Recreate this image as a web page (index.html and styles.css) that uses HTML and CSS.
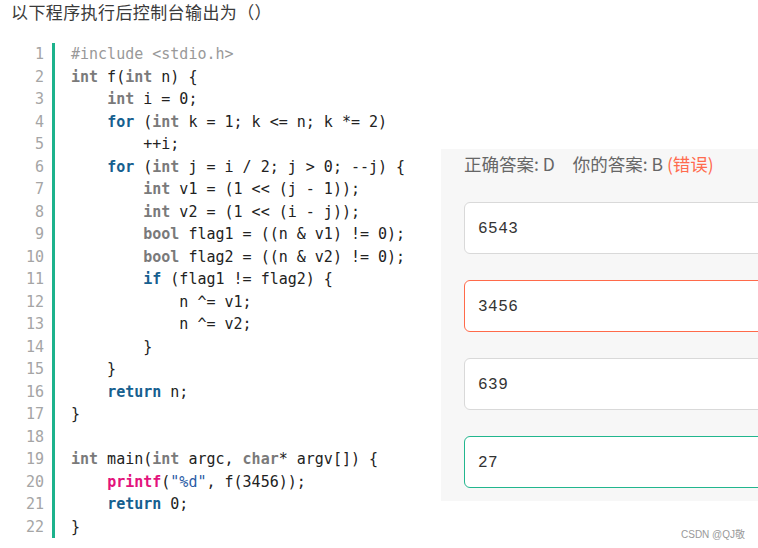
FILE: index.html
```html
<!DOCTYPE html>
<html lang="zh-CN">

<head>
    <meta charset="UTF-8">
    <meta name="viewport" content="width=device-width, initial-scale=1.0">
    <title>题目</title>
    <link rel="stylesheet" href="styles.css">
</head>

<body>
    <div class="question">以下程序执行后控制台输出为（）</div>

    <div class="main">
        <!-- 代码块 -->
        <div class="code">
            <div class="gutter">
                <div>1</div><div>2</div><div>3</div><div>4</div><div>5</div><div>6</div>
                <div>7</div><div>8</div><div>9</div><div>10</div><div>11</div><div>12</div>
                <div>13</div><div>14</div><div>15</div><div>16</div><div>17</div><div>18</div>
                <div>19</div><div>20</div><div>21</div><div>22</div>
            </div>
            <div class="lines">
<div class="ln"><span class="cm">#include &lt;stdio.h&gt;</span></div>
<div class="ln"><span class="ty">int</span> f(<span class="ty">int</span> n) {</div>
<div class="ln">    <span class="ty">int</span> i = 0;</div>
<div class="ln">    <span class="kw">for</span> (<span class="ty">int</span> k = 1; k &lt;= n; k *= 2)</div>
<div class="ln">        ++i;</div>
<div class="ln">    <span class="kw">for</span> (<span class="ty">int</span> j = i / 2; j &gt; 0; --j) {</div>
<div class="ln">        <span class="ty">int</span> v1 = (1 &lt;&lt; (j - 1));</div>
<div class="ln">        <span class="ty">int</span> v2 = (1 &lt;&lt; (i - j));</div>
<div class="ln">        <span class="ty">bool</span> flag1 = ((n &amp; v1) != 0);</div>
<div class="ln">        <span class="ty">bool</span> flag2 = ((n &amp; v2) != 0);</div>
<div class="ln">        <span class="kw">if</span> (flag1 != flag2) {</div>
<div class="ln">            n ^= v1;</div>
<div class="ln">            n ^= v2;</div>
<div class="ln">        }</div>
<div class="ln">    }</div>
<div class="ln">    <span class="kw">return</span> n;</div>
<div class="ln">}</div>
<div class="ln"> </div>
<div class="ln"><span class="ty">int</span> main(<span class="ty">int</span> argc, <span class="ty">char</span>* argv[]) {</div>
<div class="ln">    <span class="fn">printf</span>(<span class="str">"%d"</span>, f(3456));</div>
<div class="ln">    <span class="kw">return</span> 0;</div>
<div class="ln">}</div>
            </div>
        </div>

        <!-- 答案面板 -->
        <div class="answer">
            <div class="answer-head">
                <span>正确答案: D</span>
                <span class="mine">你的答案: B <span class="wrong">(错误)</span></span>
            </div>
            <div class="option">6543</div>
            <div class="option option-wrong">3456</div>
            <div class="option">639</div>
            <div class="option option-right">27</div>
        </div>
    </div>

    <div class="watermark">CSDN @QJ敬</div>
</body>

</html>
```

FILE: styles.css
```css
* {
    margin: 0;
    padding: 0;
    box-sizing: border-box
}

body {
    font-family: "Noto Sans CJK SC", "Liberation Sans", sans-serif;
    background: #fff;
    color: #333;
    width: 758px;
    height: 548px;
    overflow: hidden;
    position: relative
}

.question {
    font-size: 17px;
    line-height: 24px;
    padding-left: 11px;
    color: #3a3a3a;
    letter-spacing: .4px
}

.main {
    display: flex;
    align-items: flex-start;
    margin-top: 19px
}

.code {
    display: flex;
    width: 441px;
    flex-shrink: 0;
    font-family: "DejaVu Sans Mono", "Liberation Mono", monospace;
    font-size: 15px;
    line-height: 22.5px
}

.gutter {
    width: 52px;
    padding-right: 8px;
    text-align: right;
    color: #a5a5a5
}

.lines {
    border-left: 3px solid #1cb28c;
    padding-left: 16px;
    color: #222
}

.ln {
    white-space: pre;
    height: 22.5px
}

.cm {
    color: #999
}

.ty {
    color: #7a7a7a;
    font-weight: bold
}

.kw {
    color: #16608f;
    font-weight: bold
}

.fn {
    color: #e3137c;
    font-weight: bold
}

.str {
    color: #2a5ca6
}

.answer {
    width: 317px;
    flex-shrink: 0;
    overflow: hidden;
    margin-top: 106px;
    background: #f7f7f7;
    padding: 4px 0 13px 23px
}

.answer-head {
    font-size: 17.5px;
    line-height: 22px;
    color: #666;
    margin-bottom: 27px;
    white-space: nowrap
}

.mine {
    margin-left: 14px
}

.wrong {
    color: #ff6b4e
}

.option {
    height: 52px;
    width: 320px;
    background: #fff;
    border: 1px solid #d9d9d9;
    border-radius: 6px;
    padding: 2px 0 0 13px;
    display: flex;
    align-items: center;
    font-family: "Liberation Mono", monospace;
    font-size: 16px;
    letter-spacing: .5px;
    color: #333;
    margin-bottom: 26px
}

.option:last-child {
    margin-bottom: 0
}

.option-wrong {
    border-color: #ff6a4a
}

.option-right {
    border-color: #22b68e
}

.watermark {
    position: absolute;
    left: 681px;
    top: 526px;
    font-family: "Liberation Sans", "Noto Sans CJK SC", sans-serif;
    font-size: 10px;
    color: #999
}
```
